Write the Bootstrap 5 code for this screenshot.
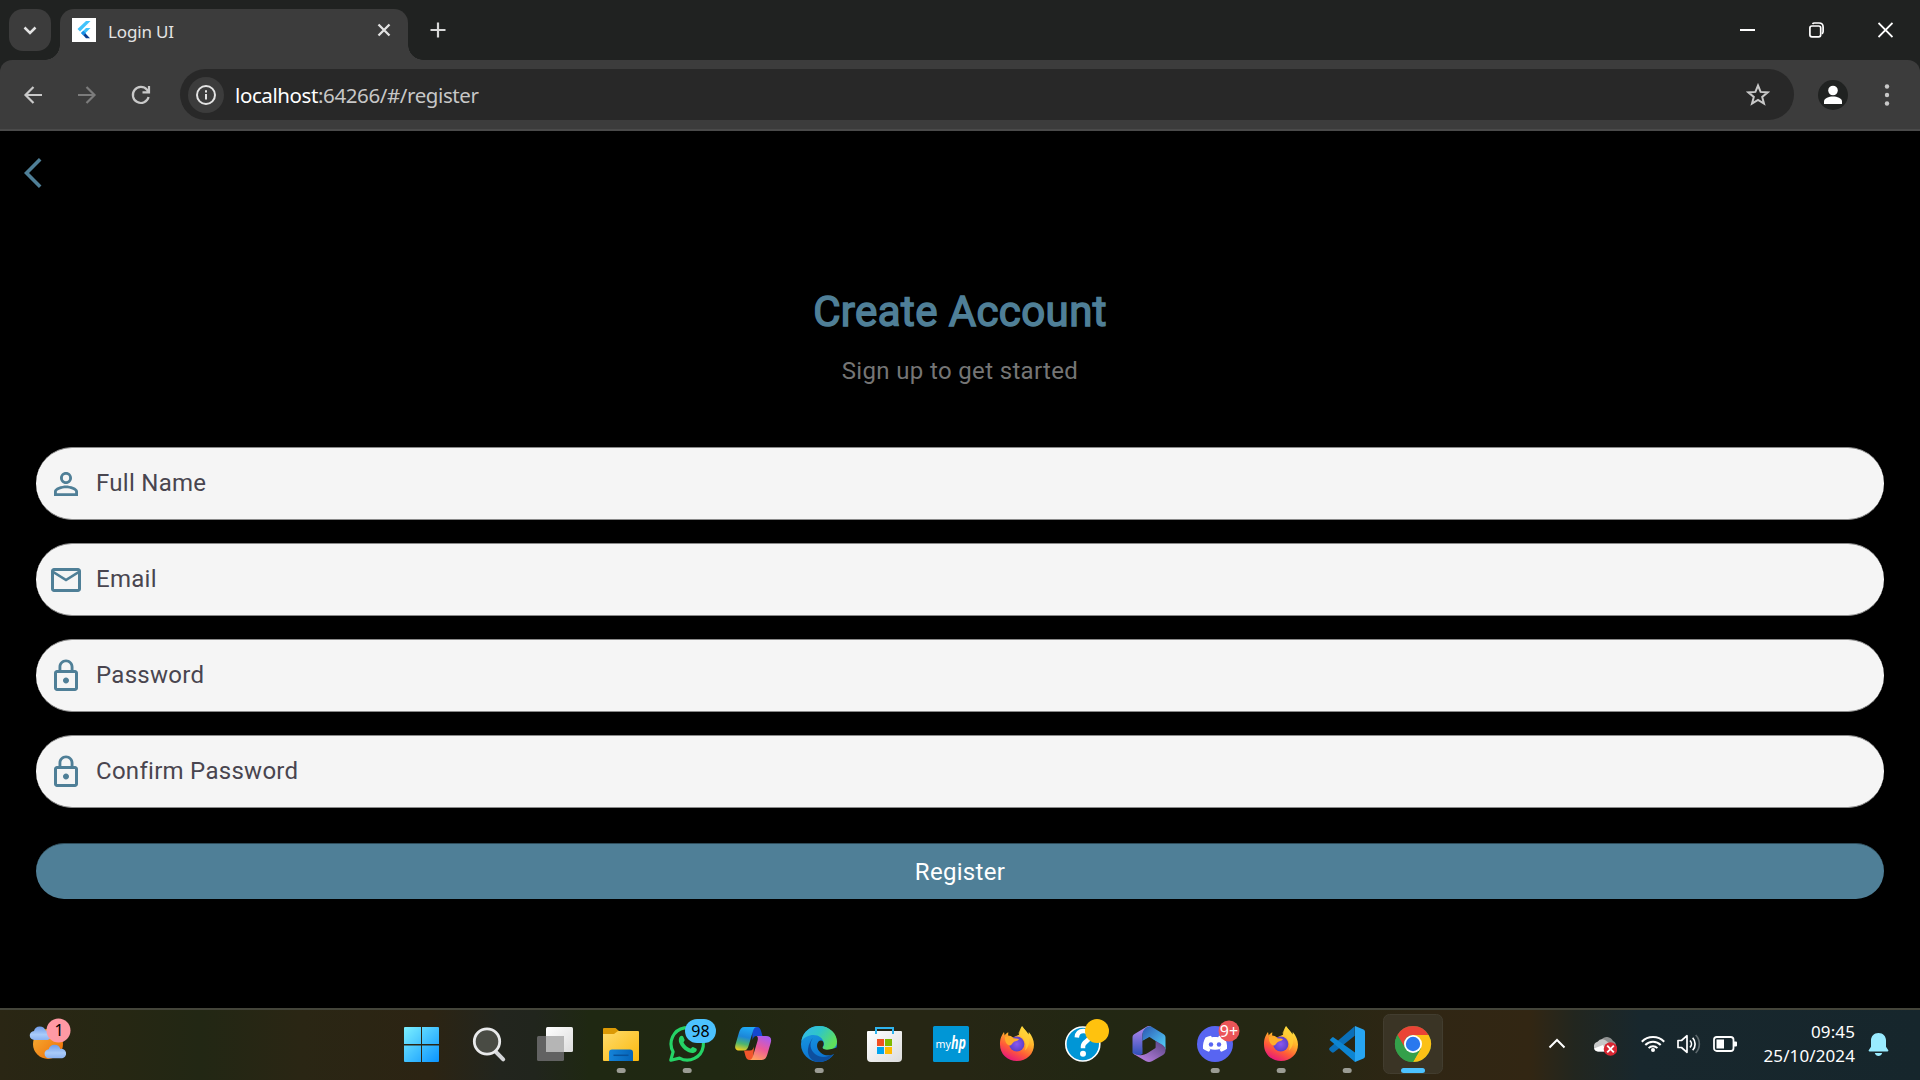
<!DOCTYPE html>
<html lang="en">
<head>
<meta charset="utf-8">
<title>Login UI</title>
<link href="https://cdn.jsdelivr.net/npm/bootstrap@5.3.0/dist/css/bootstrap.min.css" rel="stylesheet">
<script src="https://cdn.jsdelivr.net/npm/bootstrap@5.3.0/dist/js/bootstrap.bundle.min.js"></script>
<style>
html,body{width:1920px;height:1080px;overflow:hidden;background:#000}
body{font-family:"Noto Sans","Open Sans",sans-serif}
svg{display:block;flex:none}
.strip{height:60px;background:#202221;padding:9px 27px 0 9px}
.tabsearch{width:42px;height:42px;border-radius:14px;background:#3c3c3c}
.apptab{width:348px;height:51px;margin-left:9px;border-radius:14px 14px 0 0;background:#3c3c3c;padding:0 15px 0 12px;position:relative}
.apptab::before,.apptab::after{content:"";position:absolute;bottom:0;width:15px;height:15px}
.apptab::before{left:-15px;background:radial-gradient(circle at 0 0,transparent 14.5px,#3c3c3c 15px)}
.apptab::after{right:-15px;background:radial-gradient(circle at 100% 0,transparent 14.5px,#3c3c3c 15px)}
.favicon{margin-top:9px}
.tabtitle{font:17px/24px "Noto Sans",sans-serif;color:#e3e3e3;margin:11px 0 0 12px;letter-spacing:-.15px}
.tabclose{margin-top:12px}
.newtab{margin:12px 0 0 21px}
.winbtns{gap:53px;margin-top:12.5px}
.toolwrap{background:#202221;height:71px}
.toolrow{height:71px;background:#3c3c3c;border-bottom:2px solid #4a4a4a;border-radius:12px 12px 0 0;padding:0 22px}
.navicons{gap:32px}
.urlpill{height:51px;background:#282828;border-radius:26px;padding:0 24px 0 8px;margin-left:28px;width:1614px}
.infodot{width:36px;height:36px;border-radius:50%;background:#3c3c3c}
.urltext{font:20.5px/30px "Noto Sans",sans-serif;color:#c7c7c7;margin-left:11px;letter-spacing:-.4px}
.urltext b{font-weight:400;color:#fff}
.profile{margin-left:24px}
.kebab{margin-left:33px}
.appview{height:877px;background:#000;font-family:Roboto,sans-serif;padding:0 36px}
.backrow{height:84px;margin-left:-12px}
.apptitle{font-size:42px;line-height:50px;font-weight:400;-webkit-text-stroke:1.5px #4f7f97;color:#4f7f97;margin:72px 0 0;letter-spacing:.4px}
.subtitle{font-size:24px;line-height:36px;color:#757575;letter-spacing:.35px;margin:16px 0 0}
.fields{margin-top:58px;gap:23px}
.pillfield{height:73px;border-radius:36px;background:#f5f5f5;border-top:1px solid #8a8a8a;border-bottom:1px solid #8a8a8a;padding-left:12px;color:#49454f;font-size:24px;letter-spacing:.28px}
.pillfield span{margin-left:12px;padding-bottom:2px}
.regbtn{height:56px;margin-top:35px;border-radius:28px;background:#4f7f97;border:0;border-top:1px solid #2f4d5b;color:#fff;font:400 24px/56px Roboto,sans-serif;letter-spacing:.3px;padding:0}
.taskbar{height:72px;border-top:2px solid #44453a;background:linear-gradient(90deg,#2a2614 0,#262713 120px,#222714 200px,#2a2614 300px,#2c2413 430px,#22251e 500px,#21251d 535px,#1f2812 590px,#202812 720px,#262614 860px,#262614 960px,#222713 1100px,#252713 1290px,#302614 1430px,#322613 1530px,#22261f 1575px,#18272d 1640px,#16262c 1920px)}
.weatherbox{width:390px}
.dockitem{width:66px;height:70px}
.tray{padding-right:30px}
.clock{width:118px;padding-top:10px;text-align:right;color:#fff;font:17px/24px "Noto Sans",sans-serif;letter-spacing:.1px}
svg text{font-family:"Noto Sans",sans-serif}
</style>
</head>
<body>
<header>
 <div class="strip d-flex">
  <div class="tabsearch d-flex align-items-center justify-content-center"><svg width="18" height="18" fill="none" stroke="#e3e3e3" stroke-width="2.5"><path d="M3.5 6.5 9 12l5.500-5.500"/></svg></div>
  <div class="apptab d-flex align-items-start">
   <svg class="favicon" width="24" height="24"><path fill="#fff" d="M0 0h24v24H0z"/><path fill="#42c3fb" d="M14 3h4.500L8 13.500 5.500 11z"/><path fill="#42c3fb" d="M14 10h4.500l-5 5-2.200 2.300L9 15z"/><path fill="#1a8fe8" d="m9 15 2.300-2.300 2.700 2.800-2.700 2z"/><path fill="#0a3d91" d="m11.300 17.300 2.200-1.800 4.500 4.800h-4z"/></svg>
   <span class="tabtitle">Login UI</span>
   <svg class="ms-auto tabclose" width="18" height="18" stroke="#e3e3e3" stroke-width="2.300"><path d="m3.500 3.500 11 11m0-11-11 11"/></svg>
  </div>
  <svg class="newtab" width="18" height="18" stroke="#d8d8d8" stroke-width="2.200"><path d="M9 1.500v15M1.500 9h15"/></svg>
  <div class="winbtns ms-auto d-flex">
   <svg width="16" height="17"><path fill="#fff" d="M0 7h15v2H0z"/></svg>
   <svg width="16" height="17" fill="none" stroke="#fff" stroke-width="1.700"><rect x=".9" y="4" width="10.800" height="10.800" rx="2"/><path d="M3.500 1.900c.5-.7 1-.9 2-.9H10c2.500 0 4.100 1.600 4.100 4v4.500c0 1-.3 1.700-1.200 2.200"/></svg>
   <svg width="15" height="17" stroke="#fff" stroke-width="1.800"><path d="m.5 1 14 14m0-14-14 14"/></svg>
  </div>
 </div>
 <div class="toolwrap">
  <div class="toolrow d-flex align-items-center">
   <div class="navicons d-flex">
    <svg width="22" height="22" fill="none" stroke="#c9c9c9" stroke-width="2.200"><path d="M20 11H3.500m8-8-8 8 8 8"/></svg>
    <svg width="22" height="22" fill="none" stroke="#7c7c7c" stroke-width="2.200"><path d="M2 11h16.500m-8-8 8 8-8 8"/></svg>
    <svg width="22" height="22" fill="none" stroke="#c9c9c9" stroke-width="2.200"><path d="M18.600 13A8 8 0 1 1 17 5.800l1.500 1.900M19 2v6.400h-6.500"/></svg>
   </div>
   <div class="urlpill d-flex align-items-center">
    <div class="infodot d-flex align-items-center justify-content-center"><svg width="22" height="22" fill="none" stroke="#e3e3e3" stroke-width="2"><circle cx="11" cy="11" r="9"/><path d="M11 10v5.500M11 6.200v2.200"/></svg></div>
    <span class="urltext"><b>localhost</b>:64266/#/register</span>
    <svg class="ms-auto" width="24" height="24" fill="none" stroke="#c9c9c9" stroke-width="2"><path d="m12 2.500 2.600 6.400 7 .5-5.400 4.500 1.800 6.800-6-3.700-6 3.700 1.800-6.800-5.400-4.500 7-.5z"/></svg>
   </div>
   <svg class="profile" width="30" height="30"><circle cx="15" cy="15" r="15" fill="#202221"/><circle cx="15" cy="10.500" r="4.800" fill="#fff"/><path fill="#fff" d="M6 24v-2.500c0-3.500 5-5 9-5s9 1.500 9 5V24z"/></svg>
   <svg class="kebab" width="12" height="24" fill="#c9c9c9"><circle cx="6" cy="3.500" r="2.200"/><circle cx="6" cy="12" r="2.200"/><circle cx="6" cy="20.500" r="2.200"/></svg>
  </div>
 </div>
</header>

<main class="appview d-flex flex-column">
 <div class="backrow d-flex align-items-center"><svg width="20" height="32" fill="none" stroke="#4f7f97" stroke-width="3.600"><path d="M16.200 2.200 2.500 16l13.700 13.800"/></svg></div>
 <h1 class="apptitle text-center">Create Account</h1>
 <p class="subtitle text-center">Sign up to get started</p>
 <div class="fields d-flex flex-column">
  <label class="pillfield d-flex align-items-center"><svg width="36" height="36" viewBox="0 0 24 24" fill="#4f7f97"><path d="M12 5.900a2.100 2.100 0 1 1 0 4.200 2.100 2.100 0 0 1 0-4.200m0 9c2.970 0 6.100 1.460 6.100 2.100v1.100H5.900V17c0-.64 3.130-2.100 6.100-2.100M12 4C9.790 4 8 5.790 8 8s1.790 4 4 4 4-1.790 4-4-1.790-4-4-4m0 9c-2.670 0-8 1.340-8 4v3h16v-3c0-2.660-5.330-4-8-4"/></svg><span>Full Name</span></label>
  <label class="pillfield d-flex align-items-center"><svg width="36" height="36" viewBox="0 0 24 24" fill="#4f7f97"><path d="M20 4H4c-1.100 0-1.990.9-1.990 2L2 18c0 1.100.9 2 2 2h16c1.100 0 2-.9 2-2V6c0-1.100-.9-2-2-2m0 14H4V8l8 5 8-5zm-8-7L4 6h16z"/></svg><span>Email</span></label>
  <label class="pillfield d-flex align-items-center"><svg width="36" height="36" viewBox="0 0 24 24" fill="#4f7f97"><path d="M12 17c1.100 0 2-.9 2-2s-.9-2-2-2-2 .9-2 2 .9 2 2 2m6-9h-1V6c0-2.760-2.240-5-5-5S7 3.240 7 6v2H6c-1.100 0-2 .9-2 2v10c0 1.100.9 2 2 2h12c1.100 0 2-.9 2-2V10c0-1.100-.9-2-2-2M8.900 6c0-1.710 1.390-3.100 3.100-3.100s3.100 1.390 3.100 3.100v2H8.900zM18 20H6V10h12z"/></svg><span>Password</span></label>
  <label class="pillfield d-flex align-items-center"><svg width="36" height="36" viewBox="0 0 24 24" fill="#4f7f97"><path d="M12 17c1.100 0 2-.9 2-2s-.9-2-2-2-2 .9-2 2 .9 2 2 2m6-9h-1V6c0-2.760-2.240-5-5-5S7 3.240 7 6v2H6c-1.100 0-2 .9-2 2v10c0 1.100.9 2 2 2h12c1.100 0 2-.9 2-2V10c0-1.100-.9-2-2-2M8.900 6c0-1.710 1.390-3.100 3.100-3.100s3.100 1.390 3.100 3.100v2H8.900zM18 20H6V10h12z"/></svg><span>Confirm Password</span></label>
 </div>
 <button class="regbtn btn w-100">Register</button>
</main>

<footer class="taskbar d-flex">
 <svg width="0" height="0" class="position-absolute"><defs>
  <linearGradient id="win" x1="0" y1="0" x2="1" y2="1"><stop stop-color="#7cf0ff"/><stop offset="1" stop-color="#0a94ff"/></linearGradient>
  <linearGradient id="sun" x1="0" y1="0" x2="1" y2="1"><stop stop-color="#f5b23a"/><stop offset="1" stop-color="#f06a00"/></linearGradient>
  <linearGradient id="cloud" x1="0" y1="0" x2="0" y2="1"><stop stop-color="#6f9be8"/><stop offset=".6" stop-color="#a9cbfa"/><stop offset="1" stop-color="#8bb2f2"/></linearGradient>
  <linearGradient id="fold" x1="0" y1="0" x2="1" y2="1"><stop stop-color="#ffdc6b"/><stop offset="1" stop-color="#fbb80e"/></linearGradient>
  <linearGradient id="foldb" x1="0" y1="0" x2="1" y2="0"><stop stop-color="#1583d8"/><stop offset="1" stop-color="#0464b8"/></linearGradient>
  <linearGradient id="gr" x1="0" y1="0" x2="1" y2="1"><stop stop-color="#fff"/><stop offset="1" stop-color="#dcdcdc"/></linearGradient>
  <linearGradient id="cpa" x1=".4" y1="0" x2=".2" y2="1"><stop stop-color="#1fa8f5"/><stop offset=".4" stop-color="#1c86d8"/><stop offset=".7" stop-color="#4db56f"/><stop offset="1" stop-color="#f6cf1c"/></linearGradient>
  <linearGradient id="cpb" x1=".7" y1="0" x2=".3" y2="1"><stop stop-color="#a95bf0"/><stop offset=".5" stop-color="#ec5a9a"/><stop offset="1" stop-color="#ffa060"/></linearGradient>
  <linearGradient id="eda" x1="0" y1="0" x2="1" y2=".5"><stop stop-color="#35b4f0"/><stop offset=".5" stop-color="#2fc6c8"/><stop offset="1" stop-color="#5fe05c"/></linearGradient>
  <linearGradient id="edb" x1=".3" y1="0" x2=".6" y2="1"><stop stop-color="#1a9be0"/><stop offset="1" stop-color="#0a6fd0"/></linearGradient>
  <linearGradient id="ffa" x1=".8" y1="0" x2=".3" y2="1"><stop stop-color="#fff24a"/><stop offset=".4" stop-color="#ffb02a"/><stop offset=".7" stop-color="#ff5a38"/><stop offset="1" stop-color="#e51480"/></linearGradient>
  <radialGradient id="ffb"><stop stop-color="#8a58f0"/><stop offset="1" stop-color="#5b3fc8"/></radialGradient>
  <linearGradient id="m1" x1="0" y1="0" x2="0" y2="1"><stop stop-color="#b98af0"/><stop offset="1" stop-color="#2c4fb8"/></linearGradient>
  <linearGradient id="m2" x1="0" y1="0" x2="1" y2="1"><stop stop-color="#2b55b0"/><stop offset="1" stop-color="#54d6ff"/></linearGradient>
  <linearGradient id="m3" x1="0" y1="1" x2="1" y2="0"><stop stop-color="#c98af0"/><stop offset="1" stop-color="#54427f"/></linearGradient>
  <g id="fx"><path fill="url(#ffa)" d="M16.500 29c.8-3 2-5 3.500-7l.7 3.500c1-1.700 2.300-2.600 3.600-3.200l-.2 3.300c2 .2 3.400.8 4.900 1.900l2.500-1.200 3.500-1.500c1-3.200 1.200-6 3-8.800 2 3.500 5 5 6.500 8.500l.3-2.500c3 3.500 5.200 8 5.200 12.500 0 9.500-7.300 16.500-17 16.500s-17-7-17-16.500c0-2 0-3.500.5-5.500"/><circle cx="32.800" cy="34" r="7.600" fill="url(#ffb)"/><path fill="#ffad2a" d="M21 27c3.500-1.500 6.500-.5 8.500 1.200 2 .2 4 .2 5.500 1.100-1.500 2.200-4 1.700-5.500 3-1.500 1.200-1.500 2.700-3.500 3.200-3-.5-5.500-3.500-5-8.500"/><path fill="#ffcf35" opacity=".7" d="M38.500 16.500c2 3.500 5.500 6.500 6.500 11.500s-1 10-4 12.500c1-4 1-8-1-11-1.500-3-5-4-5.500-6.500 1-2 2-5 4-6.500"/></g>
  <path id="cl" d="M4 14a4.500 4.500 0 0 1-.5-9A6 6 0 0 1 15 4.600 4.800 4.800 0 0 1 17 14z"/>
  <rect id="dot" x="28.700" y="58" width="9" height="5" rx="2.500" fill="#9b9c94"/>
 </defs></svg>

 <div class="weatherbox">
  <svg width="90" height="70"><circle cx="48" cy="34" r="15" fill="url(#sun)"/><use href="#cl" fill="url(#cloud)" transform="translate(30.500 16)"/><use href="#cl" fill="url(#cloud)" transform="translate(45.300 34.300)"/><circle cx="58.500" cy="20.500" r="12" fill="#ff99a4"/><text x="59" y="26" font-size="16" text-anchor="middle" fill="#000">1</text></svg>
 </div>
 <nav class="d-flex">
  <svg class="dockitem"><path fill="url(#win)" d="M15 17h16v17H14V18a1 1 0 0 1 1-1m17 0h16a1 1 0 0 1 1 1v16H32zM14 35.500h17V52H15a1 1 0 0 1-1-1zm18 0h17V51a1 1 0 0 1-1 1H32z"/></svg>
  <svg class="dockitem"><path d="m40 42 7.200 7.300" stroke="#d4d6d8" stroke-width="4" stroke-linecap="round"/><circle cx="31" cy="31.500" r="12.700" fill="#494b44" stroke="#e9eaeb" stroke-width="2.800"/></svg>
  <svg class="dockitem"><rect x="24" y="17" width="27" height="25" rx="1.500" fill="url(#gr)"/><rect x="15" y="26" width="27" height="25" rx="1.500" fill="#626262"/><path fill="#b5b5b5" d="M24 26h17a1 1 0 0 1 1 1v15H24z"/></svg>
  <svg class="dockitem"><path fill="#dc9a05" d="M16 18h11.500l3.500 3-3.500 4H15v-6a1 1 0 0 1 1-1"/><path fill="url(#fold)" d="M15 24h11l4-3h20a1 1 0 0 1 1 1v28a1 1 0 0 1-1 1H16a1 1 0 0 1-1-1z"/><path fill="url(#foldb)" d="M21 51v-8.500a3 3 0 0 1 3-3h18a3 3 0 0 1 3 3V51z"/><path stroke="#07519a" stroke-width="1.500" d="M25.500 45.300h15"/><use href="#dot"/></svg>
  <svg class="dockitem"><path fill="none" stroke="#25d366" stroke-width="3.200" stroke-linejoin="round" d="m16.800 50.200 2.300-8.400a16.200 16.200 0 1 1 6.400 6.300z"/><path fill="#25d366" d="M26 26.500c1-1.300 2.800-1 3.300.2l1.300 3c.3.900-1.200 2.100-1.100 2.900 1.500 3 4 5 6.700 6 .9.200 1.800-1.900 2.800-1.700l3.200 1.600c1 .5.600 2.300-.4 3.200-2.500 2.200-6 1.400-9-.4-3.200-1.900-6-4.800-7.400-8.300-1-2.500-.7-5 .6-6.500"/><rect x="31" y="9" width="31" height="24" rx="12" fill="#4cc2ff"/><text x="46.500" y="27" font-size="16" text-anchor="middle" fill="#000">98</text><use href="#dot"/></svg>
  <svg class="dockitem"><path fill="#1648d0" d="M32 17h5c2.500 0 3.500 2 4.200 4.500L42.500 26h-6c-2 0-3.300 1.500-4 4z"/><path fill="#f2552c" d="M24 40.500h6c2.500 0 3.500-2 4-4L33 50h-3c-3 0-4-2-4.700-4.500z"/><path fill="url(#cpa)" d="M24.500 17H37c-2 0-3.200 1.500-4 4l-4.500 15c-.9 3-2.300 4.500-5 4.500H19c-3.500 0-4.500-2.500-3.500-6l3.500-12c1-3.500 2.500-5.500 5.500-5.500"/><path fill="url(#cpb)" d="M36.500 26H46c4 0 6 2 4.800 6.500l-3.500 12c-1 3.500-2.500 5.500-5.500 5.500H29c2 0 3.200-1.500 4-4l4.500-15c.9-3 0-5-1-5"/></svg>
  <svg class="dockitem"><circle cx="33" cy="34" r="18" fill="url(#edb)"/><path fill="#0d4f9e" d="M27 28c-4 5-3 12 2 16 6 5 14 3 19-1-2.500 5-8 9-15 9-8 0-12-7-11-13 .6-5 3-9 5-11"/><path fill="url(#eda)" d="M15.500 31C17 22 24 16 33 16c11 0 18 8 18 15.500 0 5.500-4 8.500-9 8.500-4 0-6-1.500-5.500-2.500 1.500-1.500 1.800-3 1.300-5-.8-4-5-7.500-10.300-7.500-5 0-9.500 2.500-12 6"/><path fill="#262614" d="M37 31.500c1.500 3 0 4.500-.5 6C37 40 42 41 52 37l1 8-5-1c-4 2-10 2-13.500-1.500-4-3.500-4.500-8.500-1.500-11.500 1.500-1 3.200-.7 4 .5"/><use href="#dot"/></svg>
  <svg class="dockitem"><path fill="url(#gr)" d="M16 21h33a1 1 0 0 1 1 1v26a4 4 0 0 1-4 4H19a4 4 0 0 1-4-4V22a1 1 0 0 1 1-1"/><path fill="none" stroke="#2fb4ee" stroke-width="2" d="M24 24v-6h17v6"/><path fill="#f25022" d="M25 29h7v7h-7z"/><path fill="#7fba00" d="M33 29h7v7h-7z"/><path fill="#00a4ef" d="M25 37h7v7h-7z"/><path fill="#ffb900" d="M33 37h7v7h-7z"/></svg>
  <svg class="dockitem"><rect x="15" y="16" width="36" height="36" rx="1.500" fill="#0096d6"/><text x="17.500" y="38" font-size="11.500" fill="#fff" textLength="15.500" lengthAdjust="spacingAndGlyphs">my</text><text x="33" y="38.500" font-size="17" font-style="italic" font-weight="700" fill="#fff" textLength="15" lengthAdjust="spacingAndGlyphs">hp</text></svg>
  <svg class="dockitem"><use href="#fx"/></svg>
  <svg class="dockitem"><circle cx="32.800" cy="34" r="17" fill="#0096d6" stroke="#fff" stroke-width="1.600"/><path fill="none" stroke="#fff" stroke-width="4.500" d="M26.800 27.500c.3-4.500 3-6.500 6.700-6.500 4 0 6.300 2.300 6.300 5.300 0 5.200-6.800 5-6.800 10v2"/><circle cx="33" cy="43.800" r="3" fill="#fff"/><circle cx="47" cy="21" r="12" fill="#ffc20e"/></svg>
  <svg class="dockitem"><path fill="url(#m1)" d="M31 16.500 18.500 24c-1.500 1-2 2-2 3.500V43c3 3 7 3 10 1V25c0-3 1.500-5 4-6.500 1-.8 2-1.500 5-1.500-1.500-1.200-3.300-1.300-4.500-.5"/><path fill="url(#m2)" d="M31 17c2-1 3.500-1 5 0l11 6.700c1.500 1 2.500 2 2.500 3.800V40c-1-3-2-4-4-5l-6-4-6-4-7 4v-7c0-3 2-5.500 4.500-7"/><path fill="url(#m3)" d="m17 43 1.500 1.500L30 51.300c2 1 4 1 6 0L47 45c2-1.300 2.500-3 2.500-5s-1-4-3.500-5.500L39.500 31v7l-7 4.500C27 46 22 46 17 43"/><path fill="#242713" d="m33 27.500 6.200 3.600v6.400L33 41.200l-6.200-3.700v-6.400z"/></svg>
  <svg class="dockitem"><circle cx="33" cy="34" r="18" fill="#5865f2"/><path fill="#fff" d="m29 25.700.8 1.600c2.200-.3 4.300-.3 6.400 0l.8-1.600c2 .3 4 1 5.500 1.700 1.800 3.300 2.900 7 2.500 11.300-2 1.500-4 2.400-6 3l-1.500-2.300 1.500-.9c-4 1.600-8 1.600-12 0l1.500.9-1.500 2.300c-2-.6-4-1.500-6-3-.4-4.300.7-8 2.500-11.300 1.600-.8 3.500-1.400 5.500-1.700"/><circle cx="29" cy="34.500" r="2.200" fill="#5865f2"/><circle cx="37" cy="34.500" r="2.200" fill="#5865f2"/><circle cx="47" cy="21" r="10.500" fill="#eb5558"/><text x="47" y="26.500" font-size="16" text-anchor="middle" fill="#fff">9+</text><use href="#dot"/></svg>
  <svg class="dockitem"><use href="#fx"/><use href="#dot"/></svg>
  <svg class="dockitem"><path fill="#0a6fb8" d="m15.700 37.800 25-21.500v9.500L20 42.300c-.8.600-1.500.5-2.200 0l-2-1.800c-.9-.9-.9-1.800-.1-2.700"/><path fill="#0d85d2" d="m15.700 30 2.100-2.200c.7-.6 1.500-.6 2.300 0L41 42.500V52z"/><path fill="#27a5f2" d="m41 16 8.500 3.600c1 .5 1.500 1.300 1.500 2.400v24c0 1.200-.5 2-1.500 2.500L41 52z"/><use href="#dot"/></svg>
  <svg class="dockitem"><rect x="3.500" y="4.500" width="59" height="59" rx="6" fill="#3a3425" stroke="#423d2f"/><circle cx="33" cy="34" r="18" fill="#34a04a"/><path fill="#fbc116" d="M33 25h15.600A18 18 0 0 1 33 52l7.800-13.500z"/><path fill="#ea4335" d="M17.400 25a18 18 0 0 1 31.200 0H33a9 9 0 0 0-7.800 13.500z"/><path fill="#34a04a" d="M17.400 25a18 18 0 0 0 15.600 27l7.800-13.500A9 9 0 0 1 25.200 38.500z"/><circle cx="33" cy="34" r="9" fill="#fff"/><circle cx="33" cy="34" r="7.200" fill="#2a78ee"/><rect x="21" y="58" width="24" height="5" rx="2.500" fill="#4cc2ff"/></svg>
 </nav>
 <div class="tray ms-auto d-flex align-items-start">
  <svg class="me-4" width="24" height="70" fill="none" stroke="#fff" stroke-width="2"><path d="m4.500 37.500 7.500-7.500 7.500 7.500"/></svg>
  <svg class="me-4" width="24" height="70"><path fill="#8e9090" d="M8 30a7 7 0 0 1 12 1c2 .5 3 2.500 3 5l-11 5z"/><path fill="#c8c9c9" d="M5 41.500a5 5 0 0 1-.5-9.700A6.500 6.500 0 0 1 12 30l7 5-6 6.500z"/><path fill="#fff" d="m1 38.500 9-3.500 3 6.500H5c-2 0-3.300-1.300-4-3"/><circle cx="17.500" cy="39" r="6.800" fill="#d92632"/><path stroke="#fff" stroke-width="1.900" d="m14.200 35.700 6.600 6.600m0-6.600-6.600 6.600"/></svg>
  <div class="d-flex" style="gap:12px">
  <svg width="24" height="70" fill="none" stroke="#fff" stroke-width="2"><path d="M.8 31.700a15.500 15.500 0 0 1 22.400 0M4.300 35a10.800 10.800 0 0 1 15.400 0M7.600 38.100a6.200 6.200 0 0 1 8.800 0"/><circle cx="12" cy="40" r="2" fill="#fff" stroke="none"/></svg>
  <svg width="24" height="70" fill="none" stroke="#fff" stroke-width="1.700"><path stroke-linejoin="round" d="M1 30.500h3.500L10 25.700v16.600l-5.500-4.800H1z"/><path d="M13 30.500a5 5 0 0 1 0 7M15.700 27.700a9.500 9.500 0 0 1 0 12.600"/><path stroke="#5d686c" d="M18.700 25a13 13 0 0 1 0 18"/></svg>
  <svg width="24" height="70" fill="none" stroke="#fff" stroke-width="1.800"><rect x="1" y="27" width="19.500" height="14" rx="2.800"/><path fill="#fff" stroke="none" d="M3.500 29.500H11v9H3.500zM21 31.500h2a1 1 0 0 1 1 1v3a1 1 0 0 1-1 1h-2z"/></svg>
  </div>
  <div class="clock">09:45<br>25/10/2024</div>
  <svg width="24" height="70" fill="#99ebff" style="margin-left:11px"><path d="M12.500 23c-4.600 0-7.500 3.500-7.500 7.500v6.300l-2.300 3.500c-.2.600 0 1.200.8 1.200h18c.8 0 1-.6.800-1.200L20 36.800v-6.300c0-4-2.900-7.500-7.500-7.500M8.800 43h7.400c-.5 2-2 3-3.700 3s-3.200-1-3.700-3"/></svg>
 </div>
</footer>
</body>
</html>
